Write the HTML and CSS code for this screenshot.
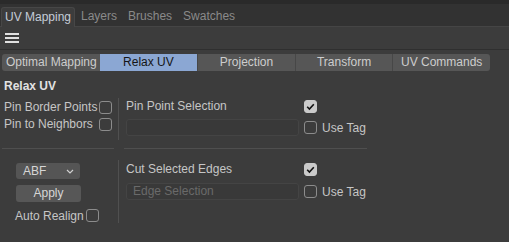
FILE: index.html
```html
<!DOCTYPE html>
<html>
<head>
<meta charset="utf-8">
<link rel="stylesheet" href="styles.css">
</head>
<body>
<div class="tabbar">
  <div class="tab active">UV Mapping</div>
  <div class="tab">Layers</div>
  <div class="tab">Brushes</div>
  <div class="tab">Swatches</div>
</div>
<div class="toolbar">
  <svg class="menu" width="14" height="11" viewBox="0 0 14 11"><rect x="0" y="0" width="14" height="2" fill="#e0e0e0"/><rect x="0" y="4" width="14" height="2" fill="#e0e0e0"/><rect x="0" y="8" width="14" height="2" fill="#e0e0e0"/></svg>
</div>
<div class="content">
  <div class="seg">
    <div class="seg-item">Optimal Mapping</div>
    <div class="seg-item on">Relax UV</div>
    <div class="seg-item">Projection</div>
    <div class="seg-item">Transform</div>
    <div class="seg-item">UV Commands</div>
  </div>
  <div class="heading">Relax UV</div>
  <div class="section s1">
    <div class="left">
      <div class="row"><span class="label">Pin Border Points</span><span class="cb"></span></div>
      <div class="row"><span class="label">Pin to Neighbors</span><span class="cb"></span></div>
    </div>
    <div class="vdiv"></div>
    <div class="right">
      <span class="label r1">Pin Point Selection</span>
      <span class="cb checked c1"><svg width="13" height="13" viewBox="0 0 13 13"><path d="M3.2 6.8 L5.4 9 L9.8 4.2" fill="none" stroke="#111" stroke-width="1.6"/></svg></span>
      <div class="input"></div>
      <span class="cb c2"></span>
      <span class="label l2">Use Tag</span>
    </div>
  </div>
  <div class="hlines"><div class="hl hl-left"></div><div class="hl hl-right"></div></div>
  <div class="section s2">
    <div class="left left2">
      <div class="dropdown"><span>ABF</span><svg width="8" height="5" viewBox="0 0 8 5"><path d="M1 1 L4 4 L7 1" fill="none" stroke="#d0d0d0" stroke-width="1.2"/></svg></div>
      <div class="button">Apply</div>
      <div class="row"><span class="label">Auto Realign</span><span class="cb"></span></div>
    </div>
    <div class="vdiv"></div>
    <div class="right">
      <span class="label r1">Cut Selected Edges</span>
      <span class="cb checked c1"><svg width="13" height="13" viewBox="0 0 13 13"><path d="M3.2 6.8 L5.4 9 L9.8 4.2" fill="none" stroke="#111" stroke-width="1.6"/></svg></span>
      <div class="input"><span class="ph">Edge Selection</span></div>
      <span class="cb c2"></span>
      <span class="label l2">Use Tag</span>
    </div>
  </div>
</div>
</body>
</html>
```
FILE: styles.css
```css
* { box-sizing: border-box; }
html, body { margin: 0; padding: 0; }
body {
  width: 509px;
  height: 242px;
  overflow: hidden;
  background: #3c3c3c;
  font-family: "Liberation Sans", Arial, sans-serif;
  font-size: 12px;
  color: #c6c6c6;
}
.tabbar {
  height: 27px;
  background: #323232;
  border-top: 4px solid #2a2a2a;
  border-bottom: 1px solid #454545;
  padding: 3px 0 0 1px;
  display: flex;
  align-items: stretch;
  white-space: nowrap;
}
.tab {
  padding: 0 5px 0 6px;
  line-height: 19px;
  color: #8a8a8a;
}
.tab.active {
  background: #3c3c3c;
  color: #c4ccd8;
  border: 1px solid #474747;
  border-bottom: none;
  border-radius: 3px 3px 0 0;
  padding: 0 5px 0 3px;
  width: 74px;
  margin-bottom: -1px;
  line-height: 19px;
}
.toolbar {
  height: 23px;
  border-bottom: 1px solid #2f2f2f;
  padding: 6px 0 0 5px;
}
.menu { display: block; }
.content { padding: 4px 0 0 0; }
.seg {
  margin-left: 2px;
  width: 488px;
  height: 17px;
  display: grid;
  grid-template-columns: repeat(5, 1fr);
  background: #565656;
  border-radius: 3px;
  overflow: hidden;
  white-space: nowrap;
}
.seg-item {
  text-align: center;
  line-height: 17px;
  color: #cdcdcd;
  border-left: 1px solid #474747;
}
.seg-item:first-child { border-left: none; text-align: left; padding-left: 4px; }
.seg-item.on {
  background: #8ba7d3;
  color: #151515;
  border-left: none;
}
.heading {
  font-weight: bold;
  color: #e2e2e2;
  padding-left: 4px;
  margin-top: 7px;
  line-height: 16px;
}
.section {
  display: flex;
  align-items: stretch;
}
.s1 { margin-top: 4px; height: 42px; }
.left {
  width: 114px;
  padding-left: 4px;
  display: flex;
  flex-direction: column;
  gap: 5px;
  padding-top: 3px;
}
.row {
  display: flex;
  align-items: center;
  justify-content: space-between;
  width: 108px;
  height: 12px;
}
.label { white-space: nowrap; }
.cb {
  display: inline-block;
  width: 13px;
  height: 13px;
  border: 1px solid #8c8c8c;
  border-radius: 3px;
}
.cb.checked {
  background: #cacaca;
  border-color: #cacaca;
}
.cb.checked svg { display: block; margin: -1px; }
.vdiv {
  width: 1px;
  background: #505050;
  margin-left: 4px;
}
.right {
  padding-left: 7px;
  display: grid;
  grid-template-columns: 173px 13px auto;
  column-gap: 5px;
  row-gap: 6px;
  align-items: center;
  align-content: start;
  padding-top: 1px;
}
.r1 { grid-column: 1; grid-row: 1; }
.c1 { grid-column: 2; grid-row: 1; }
.right .input { grid-column: 1; grid-row: 2; }
.c2 { grid-column: 2; grid-row: 2; }
.l2 { grid-column: 3; grid-row: 2; }
.input {
  height: 17px;
  background: #393939;
  border: 1px solid #444444;
  border-radius: 3px;
  padding-left: 6px;
  line-height: 15px;
}
.ph { color: #6a6a6a; }
.hlines {
  display: flex;
  margin-top: 8px;
  height: 1px;
}
.hl { height: 1px; background: #4f4f4f; }
.hl-left { width: 112px; margin-left: 2px; }
.hl-right { width: 243px; margin-left: 10px; }
.s2 { margin-top: 11px; height: 63px; }
.left2 {
  padding-left: 15px;
  gap: 6px;
  padding-top: 3px;
}
.left2 .row { width: 84px; height: 13px; margin-top: 1px; }
.dropdown {
  width: 64px;
  height: 16px;
  margin-left: 1px;
  background: #555555;
  border-radius: 3px;
  display: flex;
  justify-content: space-between;
  align-items: center;
  padding: 0 6px 0 7px;
  color: #d6d6d6;
}
.dropdown svg { display: block; }
.button {
  width: 65px;
  height: 17px;
  margin-left: 1px;
  background: #575757;
  border-radius: 3px;
  text-align: center;
  line-height: 17px;
  color: #d6d6d6;
}
.s2 .right { padding-top: 2px; row-gap: 7px; }
```
